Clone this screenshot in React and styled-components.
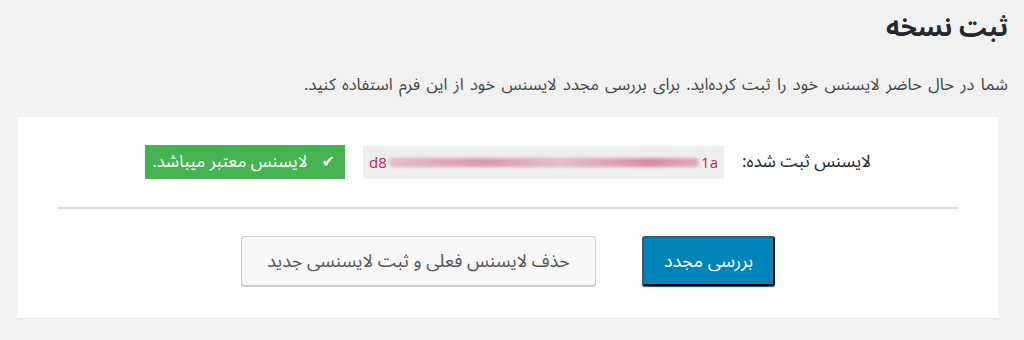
import React from "react";
import styled, { createGlobalStyle } from "styled-components";

const GlobalStyle = createGlobalStyle`
  html, body {
    margin: 0;
    padding: 0;
    background: #f1f1f1;
  }
  body {
    font-family: "Noto Sans Arabic", "DejaVu Sans", "Noto Sans", sans-serif;
    color: #23282d;
  }
`;

const Page = styled.div`
  direction: rtl;
  width: 1024px;
  height: 340px;
  box-sizing: border-box;
  padding: 8px 16px 0 17px;
  overflow: hidden;
`;

const Title = styled.h1`
  margin: 0;
  font-size: 26px;
  font-weight: 700;
  line-height: 40px;
  color: #23282d;
`;

const Intro = styled.p`
  margin: 25px 0 20px;
  font-size: 16.5px;
  word-spacing: 2px;
  line-height: 24px;
  color: #444;
`;

const Card = styled.div`
  background: #fff;
  margin-right: 9px;
  padding: 28px 41px 32px;
  display: flex;
  flex-direction: column;
  box-shadow: 0 1px 1px rgba(0, 0, 0, 0.04);
`;

const Row = styled.div`
  display: flex;
  align-items: center;
  justify-content: center;
  gap: 18px;
  height: 34px;
`;

const Label = styled.span`
  font-size: 17px;
  color: #23282d;
  white-space: nowrap;
`;

const KeyBox = styled.div`
  direction: ltr;
  width: 361px;
  height: 33px;
  box-sizing: border-box;
  background: #eee;
  display: flex;
  align-items: center;
  padding: 0 6px;
  font-family: "Open Sans", "DejaVu Sans", sans-serif;
  font-size: 15px;
  color: #c7254e;
`;

const Smear = styled.span`
  flex: 1;
  height: 9px;
  margin: 0 2px;
  border-radius: 4px;
  background: linear-gradient(
    90deg,
    rgba(214, 120, 150, 0.4),
    rgba(210, 90, 130, 0.6) 30%,
    rgba(220, 140, 165, 0.5) 55%,
    rgba(205, 85, 125, 0.65) 85%,
    rgba(214, 120, 150, 0.55)
  );
  filter: blur(1.5px);
`;

const Badge = styled.div`
  width: 200px;
  height: 34px;
  box-sizing: border-box;
  background: #46b450;
  color: #fff;
  display: flex;
  align-items: center;
  gap: 14px;
  padding: 0 10px;
  font-size: 17px;
  white-space: nowrap;
`;

const Check = styled.span`
  font-size: 16px;
  font-weight: 700;
`;

const Divider = styled.hr`
  width: 100%;
  margin: 28px 0 27px;
  border: 0;
  border-top: 2px solid #ddd;
`;

const Actions = styled.div`
  display: flex;
  justify-content: center;
  gap: 46px;
`;

const Button = styled.button`
  height: 50px;
  box-sizing: border-box;
  padding: 0 10px;
  width: ${({ $w }) => $w}px;
  font-family: "Noto Sans Arabic", "DejaVu Sans", "Noto Sans", sans-serif;
  font-size: 18px;
  white-space: nowrap;
  border-radius: 3px;
  cursor: pointer;
  background: ${({ $primary }) => ($primary ? "#0085ba" : "#f7f7f7")};
  color: ${({ $primary }) => ($primary ? "#fff" : "#555")};
  border: 1px solid ${({ $primary }) => ($primary ? "#0073aa #006799 #006799" : "#ccc")};
  box-shadow: ${({ $primary }) => ($primary ? "0 1px 0 #006799" : "0 1px 0 #ccc")};
`;

export default function App() {
  return (
    <>
      <GlobalStyle />
      <Page>
        <Title>ثبت نسخه</Title>
        <Intro>
          شما در حال حاضر لایسنس خود را ثبت کرده‌اید. برای بررسی مجدد لایسنس خود از این فرم استفاده کنید.
        </Intro>
        <Card>
          <Row>
            <Label>لایسنس ثبت شده:</Label>
            <KeyBox>
              <span>d8</span>
              <Smear />
              <span>1a</span>
            </KeyBox>
            <Badge>
              <Check>✔</Check>
              <span>لایسنس معتبر میباشد.</span>
            </Badge>
          </Row>
          <Divider />
          <Actions>
            <Button $primary $w={133}>بررسی مجدد</Button>
            <Button $w={355}>حذف لایسنس فعلی و ثبت لایسنسی جدید</Button>
          </Actions>
        </Card>
      </Page>
    </>
  );
}
